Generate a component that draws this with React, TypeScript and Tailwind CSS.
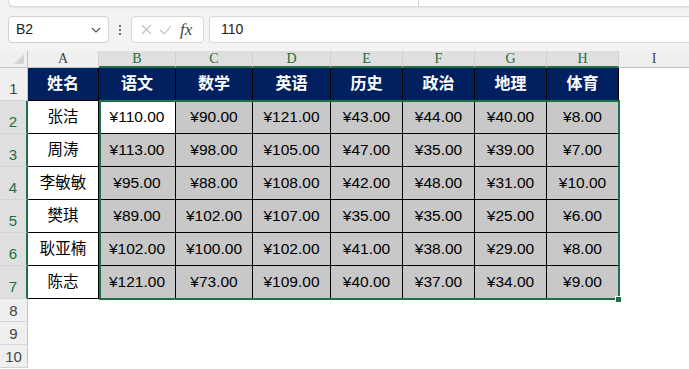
import React from 'react';

// column widths taken from the sheet, A..H selected range is B..H
const columns = [
    { label: 'A', w: 71 },
    { label: 'B', w: 77 },
    { label: 'C', w: 77 },
    { label: 'D', w: 78 },
    { label: 'E', w: 72 },
    { label: 'F', w: 72 },
    { label: 'G', w: 72 },
    { label: 'H', w: 72 },
];

const headers = ['姓名', '语文', '数学', '英语', '历史', '政治', '地理', '体育'];

const rows: string[][] = [
    ['张洁', '¥110.00', '¥90.00', '¥121.00', '¥43.00', '¥44.00', '¥40.00', '¥8.00'],
    ['周涛', '¥113.00', '¥98.00', '¥105.00', '¥47.00', '¥35.00', '¥39.00', '¥7.00'],
    ['李敏敏', '¥95.00', '¥88.00', '¥108.00', '¥42.00', '¥48.00', '¥31.00', '¥10.00'],
    ['樊琪', '¥89.00', '¥102.00', '¥107.00', '¥35.00', '¥35.00', '¥25.00', '¥6.00'],
    ['耿亚楠', '¥102.00', '¥100.00', '¥102.00', '¥41.00', '¥38.00', '¥29.00', '¥8.00'],
    ['陈志', '¥121.00', '¥73.00', '¥109.00', '¥40.00', '¥37.00', '¥34.00', '¥9.00'],
];

const cellFont = { fontFamily: '"Liberation Sans", "Noto Sans CJK SC", sans-serif' };
// column letters in the reference are a thin serif face
const letterFont = { fontFamily: '"Liberation Serif", "DejaVu Serif", serif' };

const RowHeader = ({ n, selected, tall }: { n: number; selected: boolean; tall: boolean }) => (
    <div
        className={`flex justify-center border-b border-[#d4d4d4] text-[15px] leading-none ${tall ? 'items-end pb-[4px]' : 'items-center'} ${selected ? 'bg-[#dfdfdf] text-[#1e6e42] border-r-2 border-r-[#1e7145]' : 'bg-[#efefef] text-[#444] border-r border-r-[#c4c4c4]'}`}
        style={cellFont}
    >
        {n}
    </div>
);

export default function App() {
    return (
        <div className="w-[689px] h-[369px] overflow-hidden bg-[#f3f3f3] flex flex-col" style={cellFont}>
            {/* bottom edge of the ribbon */}
            <div className="h-[8px] pl-[8px] flex">
                <div className="flex-1 h-[7px] bg-white rounded-bl-[6px] border-b border-l border-[#dcdcdc] shadow-[0_1px_2px_rgba(0,0,0,0.08)] relative overflow-hidden">
                    <div className="absolute left-[409px] top-0 w-px h-[6px] bg-[#d6d6d6]" />
                </div>
            </div>

            {/* formula bar */}
            <div className="h-[43px] flex items-start pt-[8px] pl-[8px] gap-0">
                <div className="w-[101px] h-[27px] bg-white border border-[#d1d1d1] rounded-[4px] flex items-center justify-between pl-[7px] pr-[7px]">
                    <span className="text-[14px] text-[#222]">B2</span>
                    <svg width="10" height="6" viewBox="0 0 10 6" fill="none">
                        <path d="M1 1l4 4 4-4" stroke="#555" strokeWidth="1.2" />
                    </svg>
                </div>
                <div className="w-[22px] h-[27px] flex flex-col items-center justify-center gap-[2px]">
                    <span className="w-[2px] h-[2px] bg-[#444] rounded-full" />
                    <span className="w-[2px] h-[2px] bg-[#444] rounded-full" />
                    <span className="w-[2px] h-[2px] bg-[#444] rounded-full" />
                </div>
                <div className="w-[73px] h-[27px] bg-white border border-[#d8d8d8] rounded-[4px] flex items-center pl-[9px] gap-[7px]">
                    <svg width="11" height="11" viewBox="0 0 11 11" fill="none">
                        <path d="M1 1l9 9M10 1l-9 9" stroke="#bdbdbd" strokeWidth="1.1" />
                    </svg>
                    <svg width="13" height="10" viewBox="0 0 13 10" fill="none">
                        <path d="M1 5l4 4 7-8" stroke="#bdbdbd" strokeWidth="1.1" />
                    </svg>
                    <span
                        className="text-[17px] italic text-[#444] ml-[1px]"
                        style={{ fontFamily: '"Liberation Serif", "DejaVu Serif", serif' }}
                    >
                        fx
                    </span>
                </div>
                <div className="flex-1 ml-[5px] h-[27px] bg-white border-y border-l border-[#d8d8d8] rounded-l-[4px] flex items-center pl-[11px]">
                    <span className="text-[14px] text-[#222]">110</span>
                </div>
            </div>

            {/* sheet */}
            <div className="relative flex-1 bg-white">
                <div className="grid grid-cols-[28px_71px_77px_77px_78px_72px_72px_72px_72px_1fr] grid-rows-[17px_repeat(7,33px)_repeat(3,23px)]">
                    {/* corner */}
                    <div className="bg-[#efefef] border-r border-b border-[#c4c4c4] relative">
                        <div className="absolute right-[3px] bottom-[3px] w-0 h-0 border-l-[10px] border-l-transparent border-b-[10px] border-b-[#d4d4d4]" />
                    </div>
                    {columns.map((c, i) => (
                        <div
                            key={c.label}
                            className={`flex items-center justify-center text-[14px] leading-none border-r border-r-[#cfcfcf] ${i === 0 ? 'bg-[#efefef] text-[#444] border-b border-b-[#c4c4c4]' : 'bg-[#dfdfdf] text-[#1e6e42] border-b-2 border-b-[#1e7145]'}`}
                            style={letterFont}
                        >
                            {c.label}
                        </div>
                    ))}
                    <div className="flex items-center justify-center text-[14px] leading-none bg-[#efefef] text-[#444] border-b border-b-[#c4c4c4]" style={letterFont}>
                        I
                    </div>

                    {/* row 1: titles */}
                    <RowHeader n={1} selected={false} tall />
                    {headers.map((h) => (
                        <div
                            key={h}
                            className="bg-[#002060] text-white font-bold text-[16px] flex items-center justify-center border-r border-b border-black"
                        >
                            {h}
                        </div>
                    ))}
                    <div className="bg-white" />

                    {/* rows 2..7 */}
                    {rows.map((r, ri) => (
                        <React.Fragment key={ri}>
                            <RowHeader n={ri + 2} selected tall />
                            {r.map((v, ci) => (
                                <div
                                    key={ci}
                                    className={`flex items-center justify-center text-[15.5px] text-black border-r border-b border-black ${ci === 0 || (ri === 0 && ci === 1) ? 'bg-white' : 'bg-[#c8c8c8]'}`}
                                >
                                    {v}
                                </div>
                            ))}
                            <div className="bg-white" />
                        </React.Fragment>
                    ))}

                    {/* empty rows */}
                    {[8, 9, 10].map((n) => (
                        <React.Fragment key={n}>
                            <RowHeader n={n} selected={false} tall={false} />
                            <div className="col-span-9 bg-white" />
                        </React.Fragment>
                    ))}
                </div>

                {/* selection B2:H7 */}
                <div className="absolute left-[99px] top-[49px] w-[521px] h-[200px] border-2 border-[#1e7145] pointer-events-none" />
                <div className="absolute left-[615px] top-[245px] w-[7px] h-[7px] bg-[#1e7145] border border-white" />
            </div>
        </div>
    );
}
